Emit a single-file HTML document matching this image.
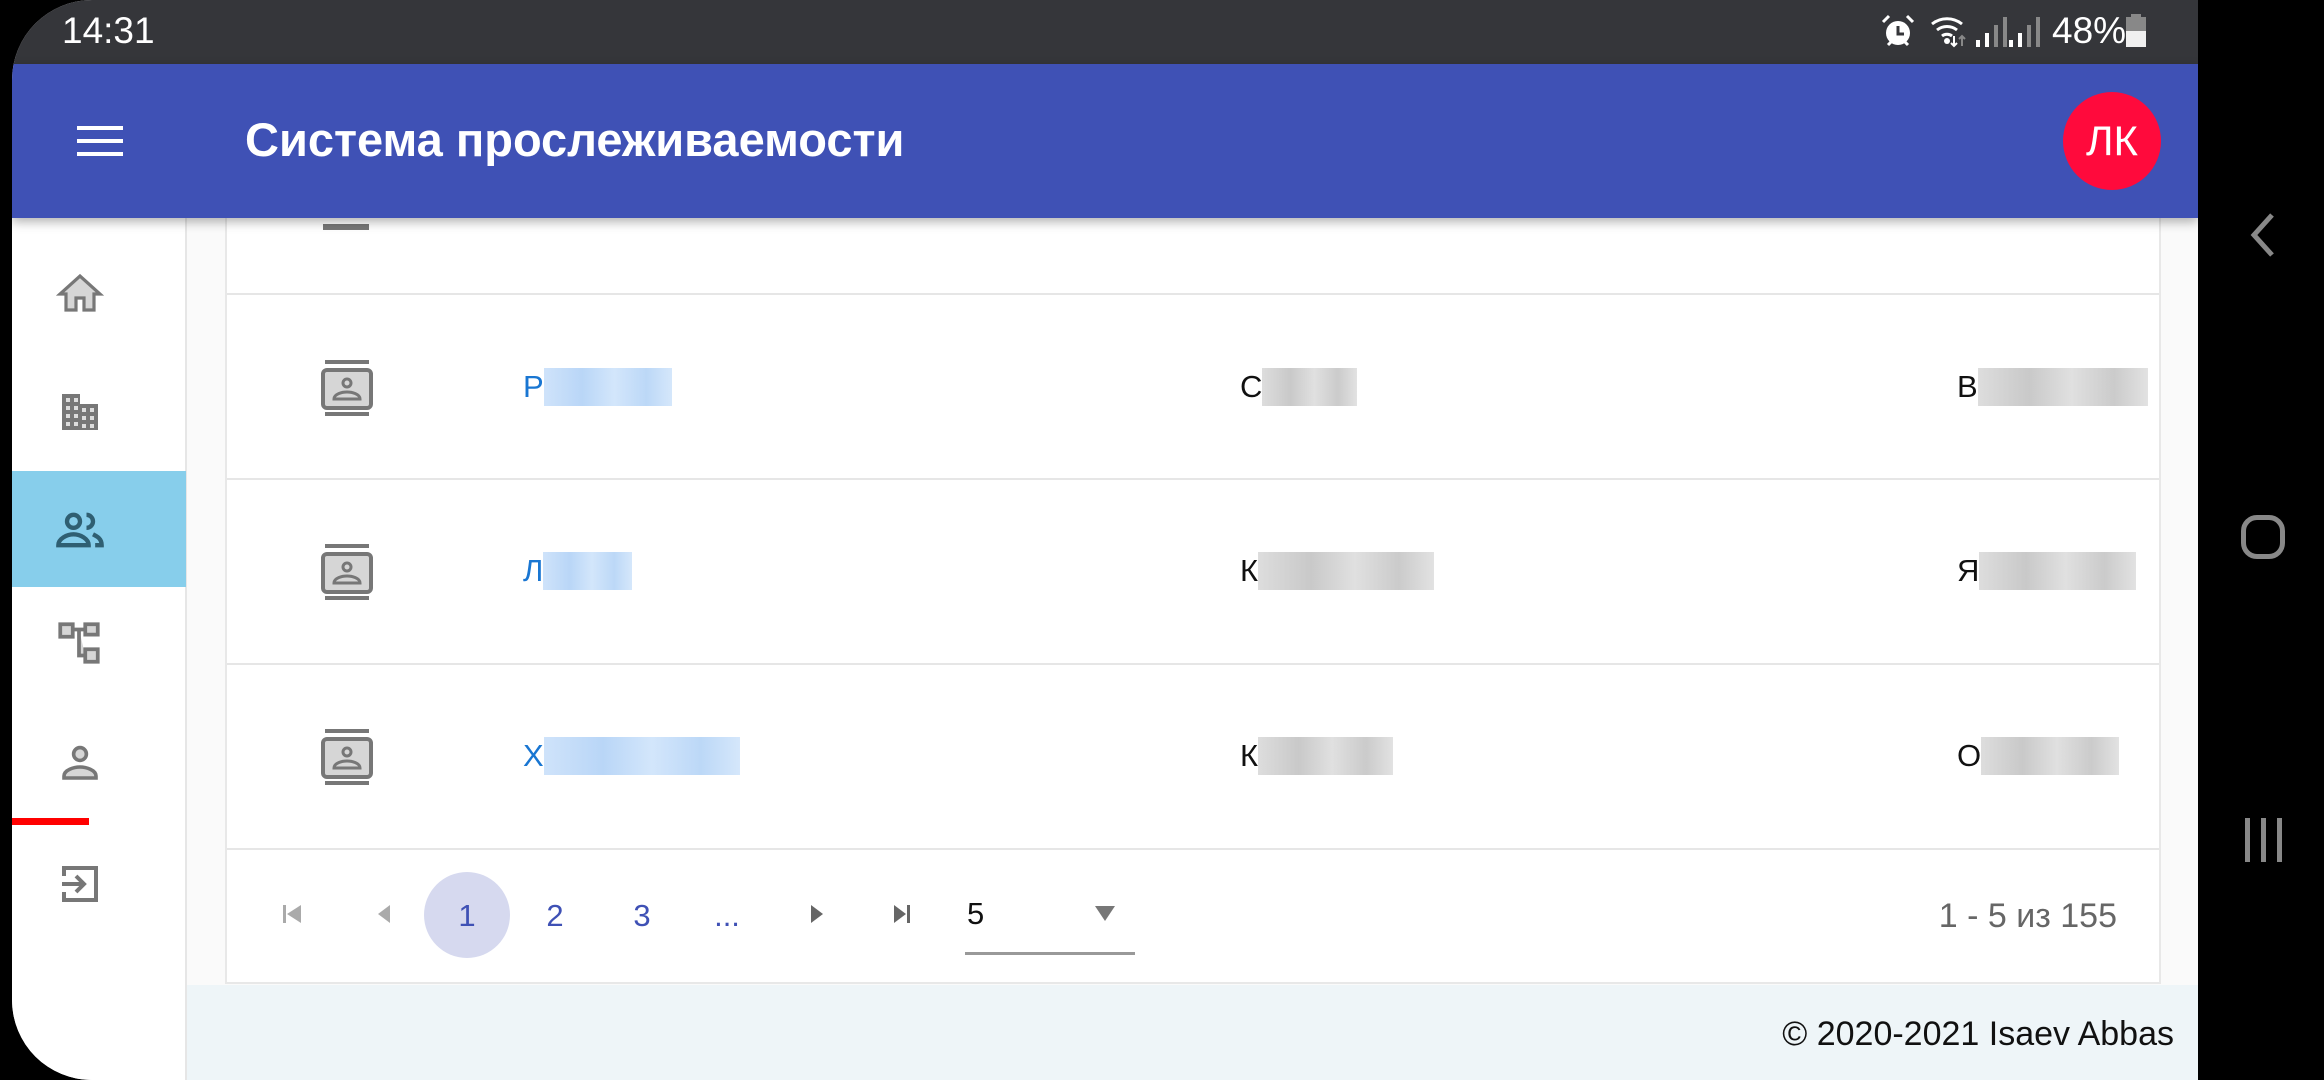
<!DOCTYPE html>
<html><head><meta charset="utf-8"><style>
*{margin:0;padding:0;box-sizing:border-box}
body{width:2324px;height:1080px;background:#000;position:relative;overflow:hidden;font-family:"Liberation Sans","Noto Sans CJK SC",sans-serif}
.abs{position:absolute}
#screen{left:12px;top:0;width:2186px;height:1080px;background:#fafafa;border-radius:80px 0 0 80px;overflow:hidden}
#status{left:0;top:0;width:2186px;height:64px;background:#35363a;color:#fff;font-size:37px}
#bar{left:0;top:64px;width:2186px;height:154px;background:#3f51b5;box-shadow:0 4px 10px rgba(0,0,0,.3);z-index:5}
#side{left:0;top:218px;width:175px;height:862px;background:#fff;border-right:2px solid #e6e6e6}
.card{left:213px;top:150px;width:1936px;height:834px;background:#fff;border:2px solid #e8e8e8}
.row{position:absolute;left:0;width:100%;height:185px;border-bottom:2px solid #e6e6e6}
.t{position:absolute;font-size:31px;display:flex;align-items:center;height:40px}
.bl{display:inline-block;height:38px;background:linear-gradient(90deg,#ddd,#c9c9c9 30%,#e0e0e0 55%,#cbcbcb 80%,#e2e2e2)}
.bb{display:inline-block;height:38px;background:linear-gradient(90deg,#cfe3fa,#b9d6f7 30%,#d3e6fb 55%,#bcd8f7 80%,#d5e7fb)}
#foot{left:175px;top:985px;width:2011px;height:95px;background:#eef5f8}
.pg{position:absolute;top:898px;font-size:31px;color:#3f51b5;transform:translateX(-50%)}
</style></head><body>
<div id="screen" class="abs">
 <div id="status" class="abs">
  <div class="abs" style="left:50px;top:10px">14:31</div>
  <svg class="abs" style="left:1868px;top:14px" width="36" height="34" viewBox="0 0 36 34"><circle cx="18" cy="19" r="12" fill="#fff"/><path d="M18 12v8h6" stroke="#35363a" stroke-width="3" fill="none"/><path d="M3 8l6-6M33 8l-6-6M8 31l3-3M28 31l-3-3" stroke="#fff" stroke-width="3"/></svg>
  <svg class="abs" style="left:1918px;top:14px" width="40" height="34" viewBox="0 0 40 34"><path d="M2 10a24 24 0 0 1 30 0M7 16a16 16 0 0 1 20 0M12 22a8 8 0 0 1 10 0" stroke="#fff" stroke-width="3" fill="none"/><circle cx="17" cy="27" r="3" fill="#fff"/><path d="M24 22v10M21 29l3 3 3-3" stroke="#fff" stroke-width="2" fill="none"/><path d="M32 32v-10M29 25l3-3 3 3" stroke="#888" stroke-width="2" fill="none"/></svg>
  <svg class="abs" style="left:1962px;top:16px" width="80" height="32"><rect x="2" y="24" width="4" height="7" fill="#fff"/><rect x="11" y="17" width="4" height="14" fill="#fff"/><rect x="20" y="9" width="4" height="22" fill="#888"/><rect x="29" y="1" width="4" height="30" fill="#888"/><rect x="35" y="24" width="4" height="7" fill="#fff"/><rect x="44" y="17" width="4" height="14" fill="#fff"/><rect x="53" y="9" width="4" height="22" fill="#888"/><rect x="62" y="1" width="4" height="30" fill="#888"/></svg>
  <div class="abs" style="left:2040px;top:10px">48%</div>
  <svg class="abs" style="left:2114px;top:14px" width="20" height="34"><rect x="5" y="0" width="10" height="4" fill="#888"/><rect x="0" y="3" width="20" height="14" fill="#888"/><rect x="0" y="17" width="20" height="16" fill="#f0f0f0"/></svg>
 </div>
 <div id="bar" class="abs">
  <svg class="abs" style="left:65px;top:62px" width="46" height="30"><rect y="0" width="46" height="4" fill="#fff"/><rect y="13" width="46" height="4" fill="#fff"/><rect y="26" width="46" height="4" fill="#fff"/></svg>
  <div class="abs" style="left:233px;top:48px;color:#fff;font-size:47px;font-weight:bold">Система прослеживаемости</div>
  <div class="abs" style="left:2051px;top:28px;width:98px;height:98px;border-radius:50%;background:#ff0a3c;color:#fff;font-size:42px;text-align:center;line-height:98px">ЛК</div>
 </div>
 <div id="side" class="abs">
  <div class="abs" style="left:0;top:253px;width:174px;height:116px;background:#87ceeb"></div>
  <svg class="abs" style="left:44px;top:52px" width="48" height="48" viewBox="0 0 24 24"><path d="M10 20v-6h4v6h5v-8h3L12 3 2 12h3v8z" fill="#d6d6d6" stroke="#777" stroke-width="1.6"/></svg>
  <svg class="abs" style="left:44px;top:170px" width="48" height="48" viewBox="0 0 24 24"><path d="M3 21V3h9v5h9v13z" fill="#777"/><g fill="#ddd"><rect x="5" y="5" width="2" height="2"/><rect x="9" y="5" width="2" height="2"/><rect x="5" y="9" width="2" height="2"/><rect x="9" y="9" width="2" height="2"/><rect x="13" y="10" width="2" height="2"/><rect x="17" y="10" width="2" height="2"/><rect x="5" y="13" width="2" height="2"/><rect x="9" y="13" width="2" height="2"/><rect x="13" y="14" width="2" height="2"/><rect x="17" y="14" width="2" height="2"/><rect x="5" y="17" width="2" height="2"/><rect x="9" y="17" width="2" height="2"/><rect x="13" y="18" width="2" height="2"/><rect x="17" y="18" width="2" height="2"/></g></svg>
  <svg class="abs" style="left:42px;top:286px" width="52" height="52" viewBox="0 0 24 24"><circle cx="9" cy="8" r="3" fill="#87ceeb" stroke="#2f5f72" stroke-width="2"/><path d="M2 19c0-3 4-5 7-5s7 2 7 5z" fill="#87ceeb" stroke="#2f5f72" stroke-width="2"/><path d="M15 5a3 3 0 0 1 0 6M18 14c2 1 4 2 4 5h-3" stroke="#2f5f72" stroke-width="2" fill="none"/></svg>
  <svg class="abs" style="left:42px;top:400px" width="50" height="50" viewBox="0 0 24 24"><path d="M3 3h6v6H3zM15 3h6v5h-6zM15 15h6v6h-6zM9 5.5h6M12 5.5V18h3" stroke="#777" stroke-width="1.8" fill="#d6d6d6"/></svg>
  <svg class="abs" style="left:44px;top:520px" width="48" height="48" viewBox="0 0 24 24"><circle cx="12" cy="8" r="3.2" fill="#d6d6d6" stroke="#777" stroke-width="1.8"/><path d="M4 20v-1c0-3 5-4.5 8-4.5s8 1.5 8 4.5v1z" fill="#d6d6d6" stroke="#777" stroke-width="1.8"/></svg>
  <div class="abs" style="left:0;top:600px;width:77px;height:7px;background:#f00"></div>
  <svg class="abs" style="left:44px;top:642px" width="48" height="48" viewBox="0 0 24 24"><path d="M4 8V4h16v16H4v-4" stroke="#777" stroke-width="2" fill="none"/><path d="M3 12h11M10 8l4 4-4 4" stroke="#777" stroke-width="2" fill="none"/></svg>
 </div>
 <div id="foot" class="abs"><div class="abs" style="right:24px;top:30px;font-size:34px;color:#111">© 2020-2021 Isaev Abbas</div></div>
 <div class="abs card">
  <div class="row" style="top:-42px"></div>
  <div class="row" style="top:143px"></div>
  <div class="row" style="top:328px"></div>
  <div class="row" style="top:513px"></div>
  <svg class="abs" style="left:94px;top:56px" width="50" height="26"><rect x="2" y="16" width="46" height="6" fill="#777"/></svg>
  <svg class="abs" style="left:94px;top:208px" width="52" height="56" viewBox="0 0 52 56"><rect x="4" y="0" width="44" height="4" fill="#777"/><rect x="4" y="52" width="44" height="4" fill="#777"/><rect x="2" y="10" width="48" height="38" rx="4" fill="#d6d6d6" stroke="#777" stroke-width="4"/><circle cx="26" cy="23" r="4" fill="none" stroke="#777" stroke-width="3"/><path d="M13 39c0-5 8-7 13-7s13 2 13 7z" fill="none" stroke="#777" stroke-width="3"/></svg>
  <svg class="abs" style="left:94px;top:392px" width="52" height="56" viewBox="0 0 52 56"><rect x="4" y="0" width="44" height="4" fill="#777"/><rect x="4" y="52" width="44" height="4" fill="#777"/><rect x="2" y="10" width="48" height="38" rx="4" fill="#d6d6d6" stroke="#777" stroke-width="4"/><circle cx="26" cy="23" r="4" fill="none" stroke="#777" stroke-width="3"/><path d="M13 39c0-5 8-7 13-7s13 2 13 7z" fill="none" stroke="#777" stroke-width="3"/></svg>
  <svg class="abs" style="left:94px;top:577px" width="52" height="56" viewBox="0 0 52 56"><rect x="4" y="0" width="44" height="4" fill="#777"/><rect x="4" y="52" width="44" height="4" fill="#777"/><rect x="2" y="10" width="48" height="38" rx="4" fill="#d6d6d6" stroke="#777" stroke-width="4"/><circle cx="26" cy="23" r="4" fill="none" stroke="#777" stroke-width="3"/><path d="M13 39c0-5 8-7 13-7s13 2 13 7z" fill="none" stroke="#777" stroke-width="3"/></svg>
  <div class="t" style="left:296px;top:215px;color:#1976d2">Р<span class="bb" style="width:128px"></span></div>
  <div class="t" style="left:1013px;top:215px;color:#111">С<span class="bl" style="width:95px"></span></div>
  <div class="t" style="left:1730px;top:215px;color:#111">В<span class="bl" style="width:170px"></span></div>
  <div class="t" style="left:296px;top:399px;color:#1976d2">Л<span class="bb" style="width:89px"></span></div>
  <div class="t" style="left:1013px;top:399px;color:#111">К<span class="bl" style="width:176px"></span></div>
  <div class="t" style="left:1730px;top:399px;color:#111">Я<span class="bl" style="width:157px"></span></div>
  <div class="t" style="left:296px;top:584px;color:#1976d2">Х<span class="bb" style="width:196px"></span></div>
  <div class="t" style="left:1013px;top:584px;color:#111">К<span class="bl" style="width:135px"></span></div>
  <div class="t" style="left:1730px;top:584px;color:#111">О<span class="bl" style="width:138px"></span></div>
  <div class="abs" style="right:42px;top:745px;font-size:34px;color:#666">1 - 5 из 155</div>
 </div>
 <svg class="abs" style="left:271px;top:904px" width="20" height="20"><rect x="0" y="1" width="3" height="18" fill="#aaa"/><path d="M18 1v18L4 10z" fill="#aaa"/></svg>
 <svg class="abs" style="left:362px;top:904px" width="20" height="20"><path d="M16 1v18L4 10z" fill="#aaa"/></svg>
 <div class="abs" style="left:412px;top:872px;width:86px;height:86px;border-radius:50%;background:#d6d9ef"></div>
 <div class="pg" style="left:455px">1</div>
 <div class="pg" style="left:543px">2</div>
 <div class="pg" style="left:630px">3</div>
 <div class="pg" style="left:715px">...</div>
 <svg class="abs" style="left:795px;top:904px" width="20" height="20"><path d="M4 1v18l12-9z" fill="#666"/></svg>
 <svg class="abs" style="left:880px;top:904px" width="20" height="20"><path d="M2 1v18l12-9z" fill="#666"/><rect x="15" y="1" width="3" height="18" fill="#666"/></svg>
 <div class="abs" style="left:955px;top:896px;font-size:31px;color:#111">5</div>
 <svg class="abs" style="left:1083px;top:906px" width="20" height="16"><path d="M0 0h20L10 15z" fill="#777"/></svg>
 <div class="abs" style="left:953px;top:952px;width:170px;height:3px;background:#999"></div>
</div>
<svg class="abs" style="left:2248px;top:212px" width="28" height="46"><path d="M24 3L6 23l18 20" stroke="#888" stroke-width="5" fill="none"/></svg>
<div class="abs" style="left:2241px;top:515px;width:44px;height:44px;border:5px solid #888;border-radius:16px"></div>
<svg class="abs" style="left:2243px;top:818px" width="40" height="44"><rect x="2" y="0" width="5" height="44" fill="#888"/><rect x="18" y="0" width="5" height="44" fill="#888"/><rect x="34" y="0" width="5" height="44" fill="#888"/></svg>
</body></html>
